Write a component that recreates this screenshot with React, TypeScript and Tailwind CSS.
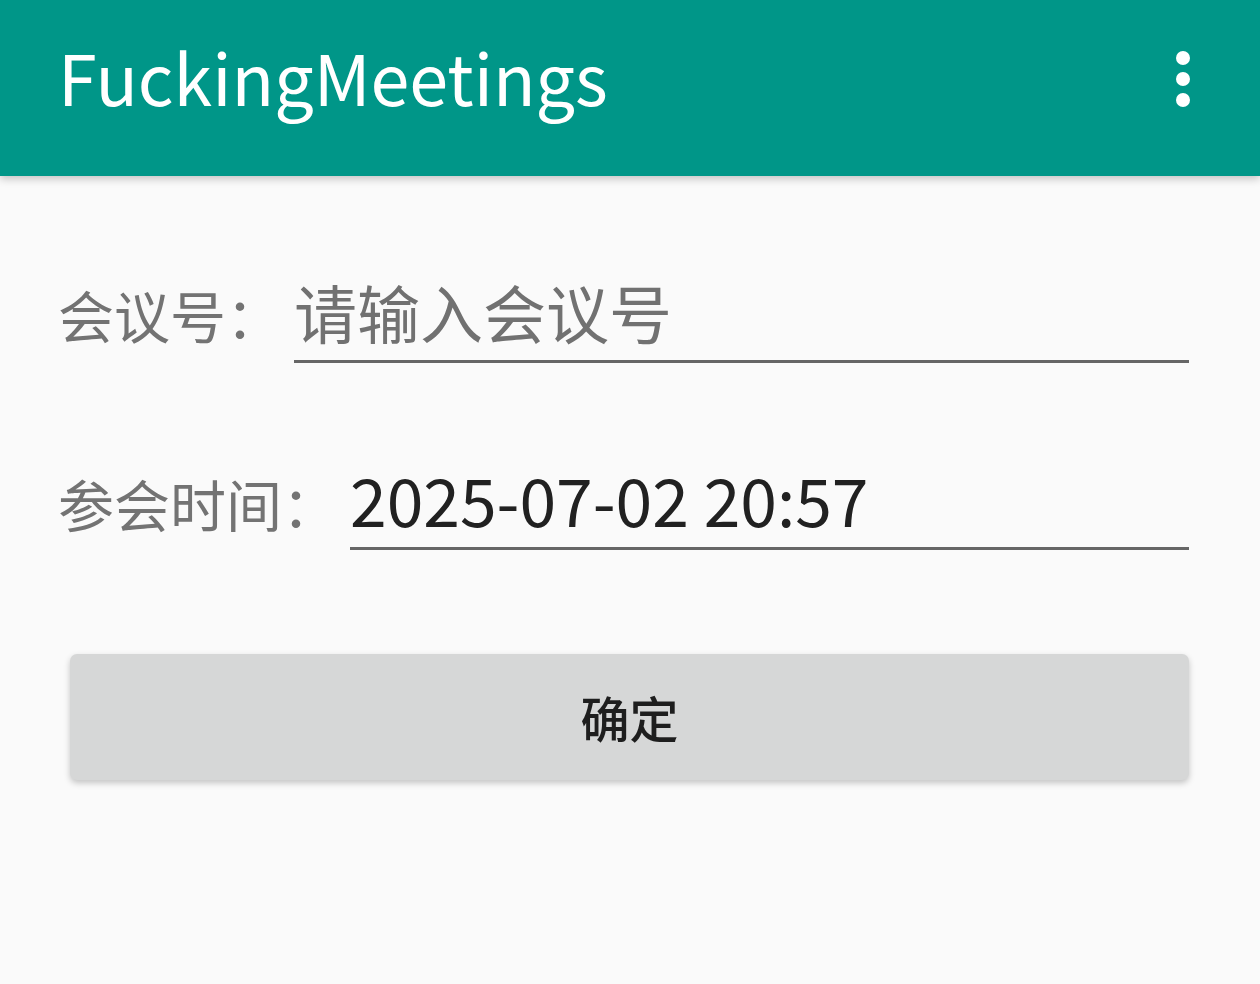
import React from "react";

export default function App() {
  return (
    <div
      className="w-[1260px] h-[984px] bg-[#fafafa] overflow-hidden"
      style={{ fontFamily: '"Noto Sans CJK SC", "Noto Sans", sans-serif' }}
    >
      {/* toolbar */}
      <div className="relative z-10 h-[176px] bg-[#009688] flex items-center justify-between pl-[58px] pr-[70px] shadow-[0_3px_8px_rgba(0,0,0,0.22)]">
        <h1 className="text-white text-[70px] leading-none mb-[24px]">FuckingMeetings</h1>
        <div className="flex flex-col gap-[7px] mb-[18px]">
          <span className="w-[14px] h-[14px] rounded-full bg-white" />
          <span className="w-[14px] h-[14px] rounded-full bg-white" />
          <span className="w-[14px] h-[14px] rounded-full bg-white" />
        </div>
      </div>

      <div className="pt-[97px] pl-[58px] pr-[71px]">
        <div className="flex items-baseline">
          <span className="text-[56px] text-[#737373] leading-[1.2] w-[236px] shrink-0">会议号：</span>
          <div className="flex-1 border-b-[3px] border-[#666666] pb-[11px]">
            <span className="text-[63px] leading-[1.2] text-[#717171]">请输入会议号</span>
          </div>
        </div>

        <div className="flex items-baseline mt-[96px]">
          <span className="text-[56px] text-[#737373] leading-[1.2] w-[292px] shrink-0">参会时间：</span>
          <div className="flex-1 border-b-[3px] border-[#666666] pb-[9px]">
            <span className="text-[66px] leading-[1.2] text-[#212121]">2025-07-02 20:57</span>
          </div>
        </div>

        <button className="mt-[104px] ml-[12px] w-[1119px] h-[126px] rounded-[7px] bg-[#d6d7d7] text-[#1e1e1e] text-[49px] font-medium shadow-[0_3px_6px_rgba(0,0,0,0.22)]">
          确定
        </button>
      </div>
    </div>
  );
}
